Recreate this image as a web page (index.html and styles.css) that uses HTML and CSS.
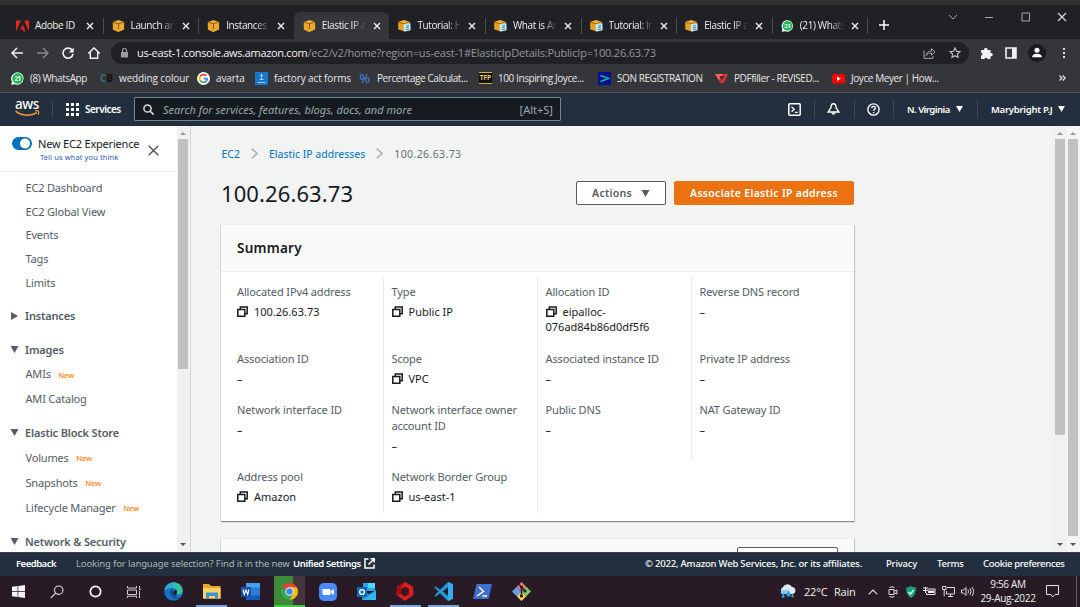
FILE: index.html
```html
<!DOCTYPE html>
<html lang="en">
<head>
<meta charset="utf-8">
<title>Elastic IP addresses | EC2 Management Console</title>
<link rel="stylesheet" href="styles.css">
</head>
<body>
<svg class="defs" width="0" height="0">
  <symbol id="cube" viewBox="0 0 12 12"><path d="M6 0 11.6 2v7.6L6 12 .4 9.600V2Z" fill="#f0a92c"/><path d="M.4 2 6 3.800V12L.4 9.600Z" fill="#eda52b"/><path d="M.6 2.100 6 3.800l5.400-1.700M6 3.800V9" stroke="#6b4a10" stroke-width=".8" fill="none"/></symbol>
  <symbol id="doc" viewBox="0 0 13 13"><path d="M6 0 12 2v8L6 12 0 10V2Z" fill="#f3b13a"/><path d="M0 2.500 5 4v8L0 10Z" fill="#e79d28"/><path d="M0 2.300 6 4l6-1.900" stroke="#7a5514" stroke-width=".8" fill="none"/><path d="M6 4.500 13 3.400v7.800l-7 1.400Z" fill="#c8e9fb"/><path d="M8 6.400l3.500-.6M8 8.400l3.500-.6M8 10.400l3.500-.6" stroke="#2a86bd" stroke-width="1"/></symbol>
  <symbol id="wa" viewBox="0 0 13 13"><path d="M.3 12.700.9 9.400A6.200 6.200 0 1 1 4 12.200Z" fill="#fff"/><circle cx="6.600" cy="6.400" r="5.300" fill="#1fb855"/><text x="6.600" y="8.700" text-anchor="middle" font-size="6.300" font-weight="bold" fill="#fff" font-family="Open Sans,sans-serif">21</text></symbol>
  <symbol id="x" viewBox="0 0 8 8"><path d="M1 1l6 6M7 1 1 7" stroke="#eee" stroke-width="1.400"/></symbol>
  <symbol id="copy" viewBox="0 0 11 11"><path d="M3.300 3V.9h6.900V7.700H8.200M.8 3.400h7v6.900h-7Z" fill="none" stroke="#16191f" stroke-width="1.500"/></symbol>
  <symbol id="down" viewBox="0 0 8 7"><path d="M0 0h8L4 7Z" fill="currentColor"/></symbol>
  <symbol id="sup" viewBox="0 0 6 3"><path d="M3 0 6 3H0Z" fill="currentColor"/></symbol>
  <symbol id="sdn" viewBox="0 0 6 3"><path d="M0 0h6L3 3Z" fill="currentColor"/></symbol>
</svg>

<div class="edge"></div>
<div class="tabs">
  <div class="tab"><svg class="fav" viewBox="0 0 13 12"><path d="M0 .5h4.800L0 11.500ZM8.200.5H13v11ZM6.500 4.400l3.200 7.100H7.500l-1-2.300H4.200Z" fill="#e8261b"/></svg><span class="tt full">Adobe ID</span><svg class="cl"><use href="#x"/></svg></div>
  <div class="tab sep"><svg class="fav"><use href="#cube"/></svg><span class="tt">Launch an</span><svg class="cl"><use href="#x"/></svg></div>
  <div class="tab sep"><svg class="fav"><use href="#cube"/></svg><span class="tt">Instances |</span><svg class="cl"><use href="#x"/></svg></div>
  <div class="tab active"><svg class="fav"><use href="#cube"/></svg><span class="tt">Elastic IP a</span><svg class="cl"><use href="#x"/></svg></div>
  <div class="tab"><svg class="fav"><use href="#doc"/></svg><span class="tt">Tutorial: H</span><svg class="cl"><use href="#x"/></svg></div>
  <div class="tab sep"><svg class="fav"><use href="#doc"/></svg><span class="tt">What is An</span><svg class="cl"><use href="#x"/></svg></div>
  <div class="tab sep"><svg class="fav"><use href="#doc"/></svg><span class="tt">Tutorial: In</span><svg class="cl"><use href="#x"/></svg></div>
  <div class="tab sep"><svg class="fav"><use href="#doc"/></svg><span class="tt">Elastic IP a</span><svg class="cl"><use href="#x"/></svg></div>
  <div class="tab sep"><svg class="fav"><use href="#wa"/></svg><span class="tt">(21) Whats</span><svg class="cl"><use href="#x"/></svg></div>
  <div class="newtab"><svg width="10" height="10" viewBox="0 0 10 10"><path d="M5 0v10M0 5h10" stroke="#fff" stroke-width="1.500"/></svg></div>
  <div class="wins">
    <svg viewBox="0 0 10 10"><path d="M1 3l4 4 4-4" stroke="#aaa" fill="none"/></svg>
    <svg viewBox="0 0 10 10"><path d="M1 5.500h8" stroke="#aaa" fill="none"/></svg>
    <svg viewBox="0 0 10 10"><path d="M1 1h7.500v8H1Z" stroke="#aaa" fill="none"/></svg>
    <svg viewBox="0 0 10 10"><path d="M1 1l8 8M9 1 1 9" stroke="#ddd" fill="none" stroke-width="1.100"/></svg>
  </div>
</div>

<div class="toolbar">
  <div class="nav">
    <svg viewBox="0 0 12 12"><path d="M12 6H1.200M6 1 1 6l5 5" stroke="#f1f1f1" stroke-width="1.500" fill="none"/></svg>
    <svg viewBox="0 0 12 12"><path d="M0 6h10.800M6 1l5 5-5 5" stroke="#8a8b8d" stroke-width="1.400" fill="none"/></svg>
    <svg viewBox="0 0 12 12"><path d="M10.300 3.500A5 5 0 1 0 11 6.800" stroke="#f1f1f1" stroke-width="1.600" fill="none"/><path d="M11.700.5v5H6.800Z" fill="#f1f1f1"/></svg>
    <svg viewBox="0 0 12 12"><path d="M.3 6.500 6 .9l5.700 5.600M2.300 5v6.300h7.400V5" stroke="#f1f1f1" stroke-width="1.400" fill="none"/></svg>
  </div>
  <div class="url">
    <svg width="7" height="10" viewBox="0 0 7 10"><path d="M0 4h7v5.500H0Z" fill="#9a9b9d"/><path d="M1.500 4V2.500a2 2 0 0 1 4 0V4" fill="none" stroke="#9a9b9d" stroke-width="1.200"/></svg>
    <span class="addr"><b>us-east-1.console.aws.amazon.com</b>/ec2/v2/home?region=us-east-1#ElasticIpDetails:PublicIp=100.26.63.73</span>
    <svg width="13" height="12" viewBox="0 0 13 12"><path d="M1 3.500v7.800h9V9M3 8.500c.5-3 2.500-4.500 5.500-4.500V1.500L12 5 8.500 8.200V6C6 6 4.500 6.500 3 8.500Z" stroke="#a5a5a5" fill="none"/></svg>
    <svg width="12" height="12" viewBox="0 0 12 12"><path d="m6 1 1.500 3.200 3.500.4-2.600 2.400.7 3.500L6 8.700l-3.100 1.800.7-3.500L1 4.600l3.500-.4Z" stroke="#c8c8c8" fill="none" stroke-width="1.100"/></svg>
  </div>
  <div class="tools">
    <svg viewBox="0 0 12 12"><path d="M0 3h3.200a1.700 1.700 0 1 1 3.200 0H9.500v3a1.700 1.700 0 1 1 0 3.200V12H6.500a1.600 1.600 0 0 0-3.100 0H0V8.500a1.500 1.500 0 0 0 0-3Z" fill="#f1f1f1"/></svg>
    <svg viewBox="0 0 12 12"><path d="M1 1h10v10H1Z" fill="none" stroke="#f1f1f1" stroke-width="1.600"/><path d="M7 1h4v10H7Z" fill="#f1f1f1"/></svg>
    <svg class="ava" viewBox="0 0 18 18"><circle cx="9" cy="9" r="9" fill="#1b1c1e"/><circle cx="9" cy="6.300" r="2.500" fill="#fff"/><path d="M4.200 13.300c0-3 2.500-3.600 4.800-3.600s4.800.6 4.800 3.600Z" fill="#fff"/></svg>
    <svg viewBox="0 0 12 12"><path d="M5 1h2v2H5zM5 5h2v2H5zM5 9h2v2H5z" fill="#ddd"/></svg>
  </div>
</div>

<div class="bookmarks">
  <span class="bm b1"><svg><use href="#wa"/></svg>(8) WhatsApp</span>
  <span class="bm b2"><i class="cb"><em>C</em>B</i>wedding colour</span>
  <span class="bm b3"><svg viewBox="0 0 13 13"><circle cx="6.500" cy="6.500" r="6.500" fill="#fff"/><path d="M9.300 3.800A3.900 3.900 0 0 0 3.100 4.600" stroke="#ea4335" stroke-width="1.700" fill="none"/><path d="M3.100 4.600a3.900 3.900 0 0 0 0 3.800" stroke="#fbbc05" stroke-width="1.700" fill="none"/><path d="M3.100 8.400a3.900 3.900 0 0 0 5.800 1.100" stroke="#34a853" stroke-width="1.700" fill="none"/><path d="M8.900 9.500A3.700 3.700 0 0 0 10.300 6.600H6.500" stroke="#4285f4" stroke-width="1.700" fill="none"/></svg>avarta</span>
  <span class="bm b4"><svg viewBox="0 0 13 13"><path d="M0 0h13v13H0Z" fill="#1976cf"/><path d="M6.500 2v5M5 3.500h3M4.500 7.500h4M2.500 10.500h8" stroke="#9ed0f6" stroke-width="1"/></svg>factory act forms</span>
  <span class="bm b5"><i class="pc">%</i>Percentage Calculat...</span>
  <span class="bm b6"><i class="tfp">TFP</i>100 Inspiring Joyce...</span>
  <span class="bm b7"><svg viewBox="0 0 13 13"><path d="M0 0h13v13H0Z" fill="#06108c"/><path d="m2.500 3.500 8 3-8 3" stroke="#12b5a6" stroke-width="1.500" fill="none"/></svg>SON REGISTRATION</span>
  <span class="bm b8"><svg viewBox="0 0 13 13"><path d="M0 2h13L9 11H5Z" fill="#c9352c"/><path d="M0 2h8L4 8Z" fill="#e86a60"/><path d="M4 4h5L7 8Z" fill="#57201e"/></svg>PDFfiller - REVISED...</span>
  <span class="bm b9"><svg viewBox="0 0 13 13"><rect y="2" width="13" height="9.500" rx="2.500" fill="#f00"/><path d="M5 4.500v4.500l4-2.250Z" fill="#fff"/></svg>Joyce Meyer | How...</span>
  <span class="more"><svg width="7" height="6" viewBox="0 0 7 6"><path d="m.5.5 2.500 2.500L.5 5.500M3.700.5 6.200 3 3.700 5.500" fill="none" stroke="#eee" stroke-width="1.100"/></svg></span>
</div>

<header class="aws">
  <div class="logo"><span>aws</span><svg width="25" height="7" viewBox="0 0 25 7"><path d="M.5 1.200c6.500 5 15.500 5 21.500 1.500" stroke="#f79b34" stroke-width="1.500" fill="none"/><path d="M20 1c3-.8 4.500-.3 3.300 3.700" stroke="#f79b34" stroke-width="1.200" fill="none"/></svg></div>
  <div class="services"><svg width="13" height="13" viewBox="0 0 13 13"><path d="M0 0h3v3H0zM5 0h3v3H5zM10 0h3v3h-3zM0 5h3v3H0zM5 5h3v3H5zM10 5h3v3h-3zM0 10h3v3H0zM5 10h3v3H5zM10 10h3v3h-3z" fill="#fff"/></svg><span>Services</span></div>
  <div class="search"><svg width="11" height="11" viewBox="0 0 11 11"><circle cx="4.500" cy="4.500" r="3.600" fill="none" stroke="#ddd" stroke-width="1.500"/><path d="m7.200 7.200 3.400 3.400" stroke="#ddd" stroke-width="1.600"/></svg><i>Search for services, features, blogs, docs, and more</i><span>[Alt+S]</span></div>
  <div class="hr">
    <div class="hi h1"><svg viewBox="0 0 13 13"><rect x=".8" y=".8" width="11.400" height="11.400" rx="1" fill="none" stroke="#fff" stroke-width="1.500"/><path d="m3.500 3.800 2.700 2.500-2.700 2.500M6.800 9.300h3" fill="none" stroke="#fff" stroke-width="1.300"/></svg></div>
    <div class="hi h2"><svg viewBox="0 0 13 13"><path d="M6.500.8C4.500.8 4 2.500 4 4.500L1.200 9h10.600L9 4.500C9 2.500 8.500.8 6.500.8Z" fill="none" stroke="#fff" stroke-width="1.400"/><path d="M5 9.500a1.600 2.500 0 0 0 3 0" stroke="#fff" fill="none" stroke-width="1.300"/></svg></div>
    <div class="hi h3"><svg viewBox="0 0 13 13"><circle cx="6.500" cy="6.500" r="5.600" fill="none" stroke="#fff" stroke-width="1.400"/><path d="M4.700 5.200c0-2.400 3.800-2.300 3.700-.1 0 1.300-1.800 1.300-1.800 2.700M6.600 8.900v1.300" fill="none" stroke="#fff" stroke-width="1.300"/></svg></div>
    <div class="hi h4"><span>N. Virginia</span><svg class="tri"><use href="#down"/></svg></div>
    <div class="hi h5"><span>Marybright P.J</span><svg class="tri"><use href="#down"/></svg></div>
  </div>
</header>

<div class="body">
  <aside>
    <div class="exp"><svg width="20" height="13" viewBox="0 0 20 13"><rect width="20" height="13" rx="6.500" fill="#0073bb"/><circle cx="13" cy="6.500" r="5" fill="#fff"/></svg><div><p>New EC2 Experience</p><a>Tell us what you think</a></div><svg class="close" width="11" height="11" viewBox="0 0 11 11"><path d="m.7.7 9.600 9.600M10.300.7.7 10.300" stroke="#545b64" stroke-width="1.500"/></svg></div>
    <ul class="top"><li>EC2 Dashboard</li><li>EC2 Global View</li><li>Events</li><li>Tags</li><li>Limits</li></ul>
    <h4><svg class="rt" viewBox="0 0 7 8"><path d="M0 0v8l7-4Z" fill="currentColor"/></svg><span>Instances</span></h4>
    <h4><svg><use href="#down"/></svg><span>Images</span></h4>
    <ul><li>AMIs<em>New</em></li><li>AMI Catalog</li></ul>
    <h4><svg><use href="#down"/></svg><span>Elastic Block Store</span></h4>
    <ul><li>Volumes<em>New</em></li><li>Snapshots<em>New</em></li><li>Lifecycle Manager<em>New</em></li></ul>
    <h4><svg><use href="#down"/></svg><span>Network &amp; Security</span></h4>
  </aside>
  <div class="sb sb1"><svg><use href="#sup"/></svg><i></i><svg><use href="#sdn"/></svg></div>
  <main>
    <nav class="crumbs"><a>EC2</a><svg viewBox="0 0 7 11"><path d="m.7.7 5.500 4.800-5.500 4.800" fill="none" stroke="#a6adad" stroke-width="1.500"/></svg><a>Elastic IP addresses</a><svg viewBox="0 0 7 11"><path d="m.7.7 5.500 4.800-5.500 4.800" fill="none" stroke="#a6adad" stroke-width="1.500"/></svg><span>100.26.63.73</span></nav>
    <div class="title"><h1>100.26.63.73</h1><button class="act"><span>Actions</span><svg width="9" height="7"><use href="#down"/></svg></button><button class="pri"><span>Associate Elastic IP address</span></button></div>
    <section class="card">
      <h2>Summary</h2>
      <div class="grid">
        <div class="c"><p>Allocated IPv4 address</p><div><svg><use href="#copy"/></svg>100.26.63.73</div></div>
        <div class="c"><p>Type</p><div><svg><use href="#copy"/></svg>Public IP</div></div>
        <div class="c"><p>Allocation ID</p><div><svg><use href="#copy"/></svg>eipalloc-<br>076ad84b86d0df5f6</div></div>
        <div class="c"><p>Reverse DNS record</p><div>–</div></div>
        <div class="c"><p>Association ID</p><div>–</div></div>
        <div class="c"><p>Scope</p><div><svg><use href="#copy"/></svg>VPC</div></div>
        <div class="c"><p>Associated instance ID</p><div>–</div></div>
        <div class="c"><p>Private IP address</p><div>–</div></div>
        <div class="c"><p>Network interface ID</p><div>–</div></div>
        <div class="c"><p>Network interface owner<br>account ID</p><div>–</div></div>
        <div class="c"><p>Public DNS</p><div>–</div></div>
        <div class="c"><p>NAT Gateway ID</p><div>–</div></div>
        <div class="c"><p>Address pool</p><div><svg><use href="#copy"/></svg>Amazon</div></div>
        <div class="c"><p>Network Border Group</p><div><svg><use href="#copy"/></svg>us-east-1</div></div>
        <div class="c"></div>
      </div>
    </section>
    <section class="card next"><div class="ghost"></div></section>
  </main>
  <div class="sb sb2"><svg><use href="#sup"/></svg><i></i><svg><use href="#sdn"/></svg></div>
  <div class="sb sb3"><svg><use href="#sup"/></svg><i></i><svg><use href="#sdn"/></svg></div>
</div>

<footer>
  <b class="fb">Feedback</b><span class="look">Looking for language selection? Find it in the new</span><b class="us">Unified Settings</b><svg width="11" height="11" viewBox="0 0 11 11"><path d="M4.500 1H1v9h9V6.500M6.500.8h3.800v3.700M10 1 4.500 6.500" fill="none" stroke="#fff" stroke-width="1.500"/></svg>
  <span class="copyr">© 2022, Amazon Web Services, Inc. or its affiliates.</span><span class="pv">Privacy</span><span class="tm">Terms</span><span class="ck">Cookie preferences</span>
</footer>

<div class="taskbar">
  <div class="ti"><svg width="13" height="13" viewBox="0 0 13 13"><path d="M0 1.800 5.600 1v5.100H0zM6.300.9 13 0v6.100H6.300zM0 6.800h5.600V12L0 11.200zM6.300 6.800H13V13l-6.700-.9z" fill="#f4f4f4"/></svg></div>
  <div class="ti"><svg width="14" height="14" viewBox="0 0 14 14"><circle cx="8.700" cy="5.200" r="4.200" fill="none" stroke="#ddd" stroke-width="1.100"/><path d="M5.700 8.200.7 13.200" stroke="#ddd" stroke-width="1.200"/></svg></div>
  <div class="ti"><svg width="13" height="13" viewBox="0 0 13 13"><circle cx="6.500" cy="6.500" r="5.200" fill="none" stroke="#f4f4f4" stroke-width="1.700"/></svg></div>
  <div class="ti"><svg width="14" height="12" viewBox="0 0 14 12"><path d="M.5 0v2h9V0M.5 4h9v4.500h-9ZM.5 12v-1.800h9V12M12.500 0v2M12.500 5v7" fill="none" stroke="#ccc"/><path d="M12 2.500h1.500V4H12z" fill="#fff"/></svg></div>
  <div class="ti"><svg width="19" height="19" viewBox="0 0 19 19"><circle cx="9.500" cy="9.500" r="9.300" fill="#1673c4"/><path d="M.5 8C2 1.500 8 0 12 .8c5 1 7 5.200 6.600 8.700-.4 3-3.600 3.700-6.100 2.500 1.500-3.500-1-6-4.500-6C4 6 1.500 7 .5 8Z" fill="#35c1a0"/><path d="M.5 8C2 1.500 8 0 12 .8 9 2 9 5 8 6 4 6 1.500 7 .5 8Z" fill="#31a9dd"/><path d="M8 6.500c-3 1.500-2.500 7.500 1.500 9.500 3 1.300 6 .5 7.500-.8-4.500 1.300-8.500-1.500-7.500-5Z" fill="#0c4f94"/><path d="M9.500 9.500c-.7 3 1 4.600 4 4.300-2-.3-1.500-1.300-1-2 .8-1.300.5-3-.5-4Z" fill="#281b26"/></svg></div>
  <div class="ti run"><svg width="18" height="15" viewBox="0 0 18 15"><path d="M0 0h6l2 2h9.500v12.500H0Z" fill="#e9a72d"/><path d="M0 4h17.500v10.500H0Z" fill="#fbd463"/><path d="M3 14.500V8.500h12v6h-3V12H6v2.500Z" fill="#3b92d4"/></svg></div>
  <div class="ti"><svg width="19" height="17" viewBox="0 0 19 17"><path d="M5 0h14v17H5Z" fill="#2b7cd3"/><path d="M5 0h14v4.500H5Z" fill="#41a5ee"/><path d="M5 12.500h14V17H5Z" fill="#185abd"/><path d="M0 4h10v10H0Z" fill="#1750a5"/><path d="m2 6.500 1.300 5L5 7l1.700 4.500L8 6.500" stroke="#fff" stroke-width="1.100" fill="none"/></svg></div>
  <div class="ti chrome"><svg width="17" height="17" viewBox="0 0 17 17"><path d="M8.500 8.500 1.140 4.250A8.500 8.500 0 0 1 15.860 4.250H8.500Z" fill="#ea4335"/><path d="M8.500 4.250h7.360A8.500 8.500 0 0 1 8.500 17L12.180 10.600Z" fill="#fbbc05"/><path d="M1.140 4.250 4.800 10.600 8.500 12.700h2.500L8.500 17A8.500 8.500 0 0 1 1.140 4.250Z" fill="#34a853"/><circle cx="8.500" cy="8.500" r="4.200" fill="#fff"/><circle cx="8.500" cy="8.500" r="3.300" fill="#4285f4"/></svg></div>
  <div class="ti"><svg width="18" height="18" viewBox="0 0 18 18"><rect width="18" height="18" rx="5" fill="#4a8cff"/><path d="M3.500 6h6.500q1.500 0 1.500 1.500V12H5q-1.500 0-1.500-1.500ZM12 8l3-2v6l-3-2Z" fill="#fff"/></svg></div>
  <div class="ti"><svg width="19" height="17" viewBox="0 0 19 17"><path d="M6 0h12v8H6Z" fill="#28a8ea"/><path d="M11 0h7v5h-7Z" fill="#50d9ff"/><path d="M5 7l7 4 7-4v10H5Z" fill="#1490df"/><path d="M5 17 19 8v9Z" fill="#32b7ef"/><path d="M0 4h10v10H0Z" fill="#0f68b7"/><circle cx="5" cy="9" r="2.400" fill="none" stroke="#fff" stroke-width="1.400"/></svg></div>
  <div class="ti run"><svg width="18" height="19" viewBox="0 0 18 19"><path d="M9 0 17 4.500 17.500 13 9 19 .5 13 1 4.500Z" fill="#d8201f"/><path d="M9 0 1 4.500.5 13 6 12 5 6Z" fill="#a80d13"/><path d="M9 4.800 13 7v5l-4 2.500L5 12V7Z" fill="#40151c"/></svg></div>
  <div class="ti run"><svg width="19" height="19" viewBox="0 0 19 19"><path d="M14 0 19 2.300v14.400L14 19 6 11.200 2 14.500.3 13.500 4.500 9.500.3 5.500 2 4.500 6 7.800ZM14 5.300 8.700 9.500 14 13.700Z" fill="#2196dc" fill-rule="evenodd"/><path d="m14 0 5 2.300v14.400L14 19Z" fill="#35adf2"/></svg></div>
  <div class="ti"><svg width="19" height="15" viewBox="0 0 19 15"><path d="M3.500 0H19l-3.500 15H0Z" fill="#3c70ce"/><path d="m6 3 4.500 4.300L4 12M9.500 12h4.500" stroke="#fff" stroke-width="1.500" fill="none"/></svg></div>
  <div class="ti"><svg width="19" height="19" viewBox="0 0 19 19"><path d="m9.500 0 4.700 4.700-4.700 4.700-4.700-4.700Z" fill="#ee7770"/><path d="m4.700 4.800 4.700 4.700-4.700 4.700L0 9.500Z" fill="#6aa0e6"/><path d="m14.300 4.800 4.700 4.700-4.700 4.700-4.700-4.700Z" fill="#84c964"/><path d="m9.500 9.600 4.700 4.700L9.500 19l-4.700-4.700Z" fill="#f3db62"/><path d="M9.500 4.500v10M7 2.500l5.500 6" stroke="#2b1c25" stroke-width="1.400"/><g fill="#2b1c25"><circle cx="9.500" cy="5" r="1.500"/><circle cx="9.500" cy="14" r="1.700"/><circle cx="13" cy="9" r="1.600"/></g></svg></div>
  <div class="tray">
    <svg width="18" height="15" viewBox="0 0 18 15"><path d="M4 10A4 4 0 0 1 4 3a5 5 0 0 1 9 0 3.600 3.600 0 0 1 1 7Z" fill="#dbeaf6"/><path d="M2 10a3 3 0 0 1 3-4q4-1 5 4Z" fill="#8fc3ea"/><path d="m4.500 9-2 3.500a1.700 1.700 0 0 0 3.300 0ZM9.500 6 7.300 10.500a2.200 2.200 0 0 0 4.400 0ZM13.500 9.500l-1.500 3a1.600 1.600 0 0 0 3 0Z" fill="#2c9fe8"/></svg>
    <span class="temp">22°C</span><span class="rain">Rain</span>
    <svg class="t1" width="10" height="6" viewBox="0 0 10 6"><path d="m.7 5.300 4.300-4.300 4.300 4.300" stroke="#e4e4e4" stroke-width="1.100" fill="none"/></svg>
    <svg class="t2" width="10" height="12" viewBox="0 0 10 12"><path d="M1 3.500h5v5H1ZM6 5l3-1v4L6 7M1.500 1.500q2.500-1.500 5 0M1.500 10.500q2.500 1.500 5 0" stroke="#ddd" fill="none"/></svg>
    <svg class="t3" width="10" height="12" viewBox="0 0 10 12"><path d="M5 0q2.500 1.500 5 1.500 0 8-5 10.500Q0 9.500 0 1.500 2.500 1.500 5 0Z" fill="#12a37a"/><path d="m2.500 6 2 2 3.300-4" stroke="#fff" stroke-width="1.300" fill="none"/></svg>
    <svg class="t4" width="13" height="9" viewBox="0 0 13 9"><path d="M4.500 2h7.500v5.500H3.500V6" stroke="#eee" fill="none"/><path d="M5 3.500h6V6H5z" fill="#eee"/><path d="M0 1h5M0 3.500h5M2.500 0v6" stroke="#eee"/></svg>
    <svg class="t5" width="13" height="11" viewBox="0 0 13 11"><path d="M5 1.500h7.500V8H4.500V5M6 10.500h5M8.500 8v2.500M.5.500H4v3H.5ZM2.200 3.500v7" stroke="#ddd" fill="none"/></svg>
    <svg class="t6" width="14" height="11" viewBox="0 0 14 11"><path d="M.5 4H2.500L5 1.500v8L2.500 7H.5ZM7 3.700q1 1.800 0 3.600M9 2.300q2 3.200 0 6.400M11 1q3.200 4.500 0 9" stroke="#ddd" fill="none"/></svg>
    <div class="clock"><span>9:56 AM</span><span>29-Aug-2022</span></div>
    <svg class="t7" width="13" height="13" viewBox="0 0 13 13"><path d="M.5.500h12v9H9L6.500 12 5 9.500H.5Z" stroke="#e4e4e4" fill="none"/></svg>
  </div>
</div>
</body>
</html>
```
FILE: styles.css
```css
*{box-sizing:border-box}
body{margin:0;width:1080px;height:607px;overflow:hidden;display:flex;flex-direction:column;font-family:"Noto Sans","Open Sans",sans-serif;font-size:11px;color:#16191f;background:#202124}
p,h1,h2,h4,ul{margin:0;padding:0;list-style:none}
svg{flex:none;display:block}
span,b,i,a,li,p,h4{white-space:nowrap}
.defs{position:absolute}
.edge{height:5px;background:#303030;flex:none}

.tabs{height:34px;flex:none;background:#202124;display:flex;padding:7px 0 0 7px;font-family:"Open Sans",sans-serif;font-size:10px;color:#eee}
.tab{width:95.6px;flex:none;display:flex;align-items:center;padding-left:9px;background:linear-gradient(#4b4c50,#4b4c50) no-repeat 0 6px/0 16px}
.tab.sep{background-size:1px 16px}
.tab.active{background:#35363a;border-radius:6px 6px 0 0}
.fav{width:13px;height:12px;margin-right:6px}
.tt{width:43px;position:relative;top:-1px;letter-spacing:-.38px;-webkit-mask-image:linear-gradient(90deg,#000 70%,rgba(0,0,0,.15) 97%);mask-image:linear-gradient(90deg,#000 70%,rgba(0,0,0,.15) 97%)}
.tt.full{-webkit-mask-image:none;mask-image:none}
.cl{width:8px;height:8px;margin-left:8px}
.newtab{padding:8px 0 0 12px;background:linear-gradient(#4b4c50,#4b4c50) no-repeat 0 6px/1px 16px}
.wins{margin-left:auto;display:flex;gap:26.500px;padding-right:13px;margin-top:0}
.wins svg{width:10px;height:10px}

.toolbar{height:27px;flex:none;background:#35363a;display:flex;align-items:center}
.nav{display:flex;gap:13.500px;padding-left:11px;width:111px;flex:none}
.nav svg{width:12px;height:12px}
.url{width:858px;height:22px;border-radius:11px;background:#202124;display:flex;align-items:center;padding:0 8px 0 10px;gap:13px}
.addr{flex:1;margin-left:-4px;font-family:"Open Sans",sans-serif;font-size:11px;letter-spacing:-.19px;color:#95979a}
.addr b{font-weight:400;letter-spacing:-.32px;color:#f4f4f4}
.tools{display:flex;align-items:center;gap:11.500px;padding-left:12px}
.tools svg{width:12px;height:12px}
.tools .ava{width:18px;height:18px}

.bookmarks{height:27px;flex:none;background:#35363a;border-bottom:1px solid #505154;display:flex;align-items:center;padding:0 0 2px 11px;font-family:"Open Sans",sans-serif;font-size:10px;letter-spacing:-.42px;color:#e8e8e8}
.bm{display:flex;align-items:center;gap:6px;flex:none}
.bm svg{width:13px;height:13px}
.bm i{width:13px;font-style:normal;text-align:center}
.cb{font-weight:700;color:#111;font-size:10px}
.cb em{font-style:normal;color:#35707a}
.b2,.b3,.b4{letter-spacing:-.12px}
.pc{color:#4d8de0;font-size:13px}
.bm .tfp{border-top:1px solid #d8b132;border-bottom:1px solid #d8b132;background:#111;color:#eed06a;font-size:6.500px;line-height:10px;font-weight:700;letter-spacing:0}
.b1{width:89px}.b2{width:97px}.b3{width:58px}.b4{width:103px}.b5{width:121px}.b6{width:119px}.b7{width:117px}.b8{width:117px}.b9{width:110px}
.more{margin-left:auto;padding-right:14px}

.aws{height:33px;flex:none;background:#232f3e;color:#fff;display:flex;align-items:center;padding-bottom:1px}
.logo{width:53px;height:16px;border-right:1px solid #3d4856;padding-left:15px;flex:none}
.logo span{display:block;font-size:13.500px;line-height:10px;height:10px;font-weight:500;letter-spacing:-.4px;margin-top:-2px}
.logo svg{margin-top:1px}
.services{display:flex;align-items:center;gap:6px;padding-left:13px;width:81px;font-weight:600;font-size:10px;letter-spacing:-.5px}
.search{width:427px;height:24px;border:1px solid #77868a;border-radius:1px;background:#161b22;display:flex;align-items:center;gap:9px;padding:0 7px 0 8px;color:#9aa7a8;font-size:11px}
.search span{margin-left:auto}
.hr{margin-left:auto;display:flex;width:305px}
.hi{height:18px;display:flex;align-items:center;border-left:1px solid #3a4654;font-size:9.500px;font-weight:600}
.hi svg{width:13px;height:13px}
.hi .tri{width:7px;height:6px;margin-left:6px}
.h1{border:0;width:39px;padding-left:13px}.h2{width:40px;padding-left:12px}.h3{width:39px;padding-left:12px}.h4{width:84px;padding-left:13px;letter-spacing:-.5px}.h5{width:103px;padding-left:13px;letter-spacing:-.25px}

.body{height:426px;flex:none;display:flex;background:#f2f3f3;overflow:hidden}
aside{width:177px;flex:none;background:#fff;color:#545b64;overflow:hidden;letter-spacing:-.18px}
.exp{height:46px;border-bottom:1px solid #eaeded;display:flex;align-items:flex-start;padding:11px 0 0 12px}
.exp>div{width:110px;margin-left:6px;margin-top:-1px}
.exp p{font-size:11px;line-height:15px;letter-spacing:-.2px;color:#16191f}
.exp a{display:block;font-size:7.500px;line-height:11px;letter-spacing:.1px;color:#3355b8;padding-left:2px;margin-top:.5px}
.close{margin-top:8px}
aside li{height:25px;display:flex;align-items:center;padding:0 0 1px 25.500px}
aside .top{padding-top:4px}
aside .top li{height:23.750px}
aside em{font-style:normal;font-weight:600;font-size:7.500px;color:#ff8a1f;margin:2px 0 0 7.500px}
aside h4{height:24px;display:flex;align-items:center;margin-top:9.500px;padding:0 0 1.500px 10px;gap:6px;font-size:11px;font-weight:600}
aside h4 svg{width:9px;height:7px}
aside h4 .rt{width:9px;height:8px}

.sb{flex:none;width:14px;background:#f1f1f1;display:flex;flex-direction:column;align-items:center;padding:6px 0;color:#505050}
.sb svg{width:6px;height:3px}
.sb i{width:10px;margin-top:4px;background:#c1c1c1}
.sb svg:last-child{margin-top:auto}
.sb1{border-right:1px solid #d5d8d8;padding-right:1px}
.sb1 i{height:230px}.sb2 i{height:296px}.sb3 i{height:397px}
.sb3{width:13px;background:#f5f5f5;padding-right:1px}
.sb1 svg:first-child,.sb2 svg:first-child,.sb3 svg:first-child{color:#999}

main{width:862px;flex:none;padding:19.500px 199px 0 30px}
.crumbs{display:flex;align-items:center;height:16px;gap:11px;padding-left:.5px;font-size:10.500px;color:#687078}
.crumbs svg{width:7px;height:11px}
.crumbs a{color:#0073bb}
.crumbs span{letter-spacing:.4px}
.title{display:flex;align-items:center;margin-top:19.500px;height:24px}
h1{font-size:22px;font-weight:400;line-height:24px;padding-bottom:1px;margin-right:auto;letter-spacing:.1px}
button{height:24px;border-radius:2px;border:1px solid #545b64;background:#fff;color:#545b64;font:600 10.500px "Noto Sans",sans-serif;display:flex;align-items:center;justify-content:center;gap:9px;padding:0;letter-spacing:.28px}
.act{width:90px;margin-right:8px}
.pri{width:180px;background:#ec7211;border-color:#ec7211;color:#fff}
.card{width:633px;height:297px;margin-top:19px;background:#fff;border-top:1px solid #eaeded;box-shadow:0 1px 1px #868b8b,1px 1px 1px #ccd0d0,-1px 0 0 #e6e8e8}
h2{height:47px;line-height:46px;padding-left:16px;background:#fafafa;border-bottom:1px solid #eaeded;font-size:13.500px;font-weight:600;letter-spacing:.25px}
.grid{display:grid;grid-template-columns:161.500px 154px 154px 154px;padding-top:4px}
.c{border-left:1px solid #eaeded;padding:8px 0 8px 8px;line-height:15.750px;color:#16191f;min-width:0}
.c:nth-child(4n+1){border:0;padding-left:16px}
.c:nth-child(3){min-height:67px}
.c p{color:#545b64;margin-bottom:3.750px;letter-spacing:-.13px}
.c svg{width:11px;height:11px;display:inline-block;vertical-align:-1px;margin-right:6px}
.next{margin-top:17px;height:60px;background:#fafafa;padding:8px 16px}
.ghost{margin-left:auto;width:101px;height:24px;border:1px solid #545b64;border-radius:2px;background:#fff}

footer{height:24px;flex:none;background:#232f3e;border-top:1px solid #39444f;color:#fff;display:flex;align-items:center;font-size:9.500px;padding:0 0 2px 16px}
footer b{font-weight:600}
.fb{width:60px;letter-spacing:-.5px}.look{width:217px;color:#aab7b8;letter-spacing:-.14px}.us{width:71px;letter-spacing:-.38px}
.copyr{margin-left:auto;width:241px}.pv{width:51px}.tm{width:46px}.ck{width:97px}
footer .copyr,.pv,.tm,.ck{font-weight:500;letter-spacing:-.2px}
footer .ck{letter-spacing:-.32px}

.taskbar{flex:1;background:#281b26;display:flex;font-family:"Open Sans",sans-serif;color:#f0f0f0}
.ti{width:38.700px;flex:none;display:flex;align-items:center;justify-content:center}
.ti:first-child{width:37.700px}
.ti.run{background:linear-gradient(#76a9d9,#76a9d9) no-repeat 50% 100%/31px 2px}
.chrome{background:linear-gradient(#40c840,#40c840) no-repeat 50% 100%/31px 2px,linear-gradient(90deg,#3f8a36 0 60%,#453640 60%) no-repeat 50% 0/31px 100%}
.tray{margin-left:auto;margin-right:3px;display:flex;align-items:center;width:298px;font-size:11px;border-right:1px solid #675a64}
.temp{width:30px;margin-left:7px;letter-spacing:-.2px}.rain{width:21px;letter-spacing:-.2px}
.t1{margin-left:13px}.t2{margin-left:10px}.t3{margin-left:8px}.t4{margin-left:7px}.t5{margin-left:6px}.t6{margin-left:6px}
.clock{width:60px;margin-left:3px;display:flex;flex-direction:column;align-items:center;line-height:14px;font-size:10px;letter-spacing:-.32px;padding-bottom:2px}
.t7{margin-left:8px}
```
